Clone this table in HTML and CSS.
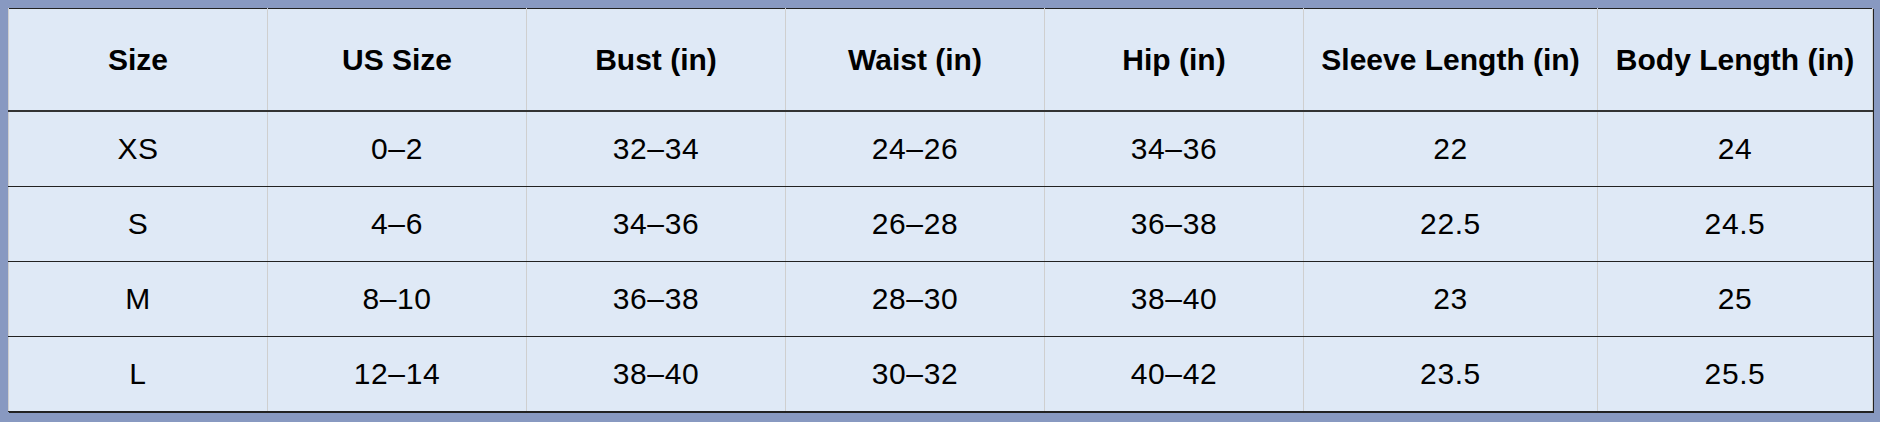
FILE: index.html
```html
<!DOCTYPE html>
<html>
<head>
<meta charset="utf-8">
<link rel="stylesheet" href="styles.css">
</head>
<body>
<table class="size-table">
  <colgroup>
    <col class="c-std"><col class="c-std"><col class="c-std"><col class="c-std"><col class="c-std"><col class="c-sleeve"><col class="c-body">
  </colgroup>
  <thead>
    <tr>
      <th>Size</th><th>US Size</th><th>Bust (in)</th><th>Waist (in)</th><th>Hip (in)</th><th>Sleeve Length (in)</th><th>Body Length (in)</th>
    </tr>
  </thead>
  <tbody>
    <tr><td>XS</td><td>0–2</td><td>32–34</td><td>24–26</td><td>34–36</td><td>22</td><td>24</td></tr>
    <tr><td>S</td><td>4–6</td><td>34–36</td><td>26–28</td><td>36–38</td><td>22.5</td><td>24.5</td></tr>
    <tr><td>M</td><td>8–10</td><td>36–38</td><td>28–30</td><td>38–40</td><td>23</td><td>25</td></tr>
    <tr><td>L</td><td>12–14</td><td>38–40</td><td>30–32</td><td>40–42</td><td>23.5</td><td>25.5</td></tr>
  </tbody>
</table>
</body>
</html>
```
FILE: styles.css
```css
html, body {
  margin: 0;
  padding: 0;
}
body {
  background: #8899c1;
  padding: 8px 7px 7px 8px;
  width: 1880px;
  height: 422px;
  box-sizing: border-box;
  font-family: "Liberation Sans", Arial, sans-serif;
  color: #000;
}
.size-table {
  border-collapse: collapse;
  table-layout: fixed;
  width: 1864px;
  border: 1px solid #222;
  box-shadow: 1px 1px 0 #222;
  background: #dfe9f6;
}
.c-std { width: 259px; }
.c-sleeve { width: 294px; }
.c-body { width: 275px; }
.size-table th,
.size-table td {
  text-align: center;
  vertical-align: middle;
  padding: 0 8px;
  white-space: nowrap;
  border-left: 1px solid #cfcfcf;
  border-right: 1px solid #cfcfcf;
  font-size: 30px;
}
.size-table th {
  height: 101px;
  font-weight: bold;
  border-bottom: 2px solid #333;
}
.size-table td {
  height: 74px;
  font-weight: normal;
  letter-spacing: 0.6px;
  border-bottom: 1px solid #222;
}
```
